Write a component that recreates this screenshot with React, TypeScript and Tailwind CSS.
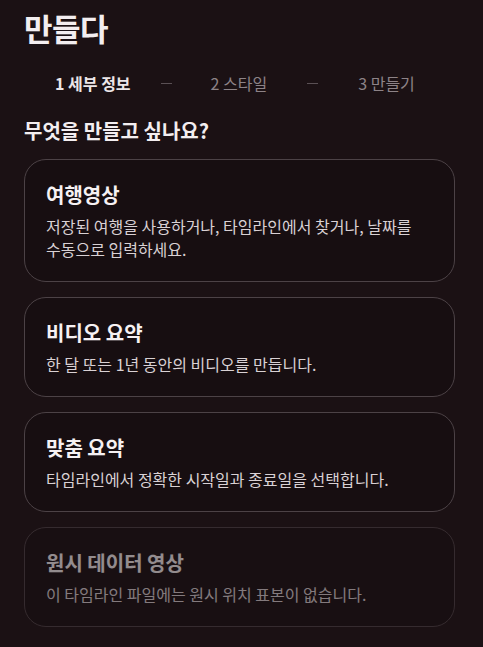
import React from "react";

const steps = [
  { label: "1 세부 정보", active: true },
  { label: "2 스타일", active: false },
  { label: "3 만들기", active: false },
];

const options = [
  {
    title: "여행영상",
    desc: "저장된 여행을 사용하거나, 타임라인에서 찾거나, 날짜를 수동으로 입력하세요.",
    disabled: false,
  },
  { title: "비디오 요약", desc: "한 달 또는 1년 동안의 비디오를 만듭니다.", disabled: false },
  { title: "맞춤 요약", desc: "타임라인에서 정확한 시작일과 종료일을 선택합니다.", disabled: false },
  { title: "원시 데이터 영상", desc: "이 타임라인 파일에는 원시 위치 표본이 없습니다.", disabled: true },
];

const App = () => {
  return (
    <div
      className="min-h-screen bg-[#1b1114] pl-[24px] pr-[28px] pt-[8px] pb-6 text-[#f3eef0]"
      style={{ fontFamily: '"Noto Sans CJK KR", "Noto Sans", sans-serif' }}
    >
      <h1 className="text-[31px] leading-[40px] font-bold tracking-[-0.5px]">만들다</h1>

      <div className="mt-[24px] flex items-center pl-[31px] text-[16px] leading-[22px]">
        {steps.map((s, i) => (
          <React.Fragment key={s.label}>
            {i === 1 && <span className="ml-[30px] mr-[39px] h-px w-[11px] bg-[#5a5054]" />}
            {i === 2 && <span className="mx-[40px] h-px w-[11px] bg-[#5a5054]" />}
            <span className={s.active ? "font-semibold text-[#ece6e8]" : "text-[#8d8387]"}>{s.label}</span>
          </React.Fragment>
        ))}
      </div>

      <h2 className="mt-[23px] text-[20px] leading-[28px] font-bold">무엇을 만들고 싶나요?</h2>

      <div className="mt-[14px] flex flex-col gap-[15px]">
        {options.map((o) => (
          <div
            key={o.title}
            className={
              "rounded-[22px] border border-[#4c4246] bg-[#170e11] px-[21px] pt-[21px] pb-[20px] " +
              (o.disabled ? "opacity-55" : "")
            }
          >
            <div className="text-[20px] leading-[28px] font-bold text-[#f6f1f3]">{o.title}</div>
            <div className="mt-[6px] break-keep text-[16px] leading-[23px] text-[#d9d1d4]">{o.desc}</div>
          </div>
        ))}
      </div>
    </div>
  );
};

export default App;
